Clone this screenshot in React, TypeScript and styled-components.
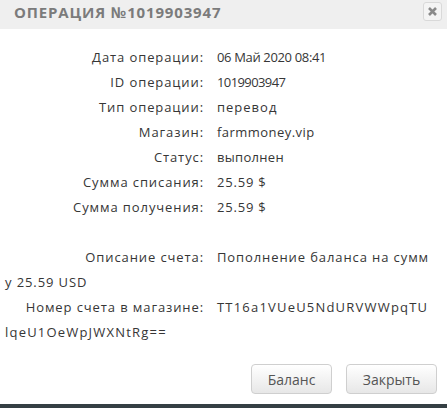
import React from "react";
import styled, { createGlobalStyle } from "styled-components";

const Global = createGlobalStyle`
  html, body { margin: 0; padding: 0; background: #fff; }
  body { width: 447px; height: 408px; overflow: hidden; }
`;

const Dialog = styled.div`
  width: 447px;
  height: 404px;
  display: flex;
  flex-direction: column;
  background: #fff;
  font-family: "Open Sans", "Liberation Sans", sans-serif;
`;

const Header = styled.div`
  height: 29px;
  flex: none;
  background: #efefef;
  display: flex;
  align-items: center;
  justify-content: space-between;
  padding: 0 5px 0 14px;
`;

const Title = styled.div`
  font-family: "Open Sans", "Liberation Sans", sans-serif;
  font-weight: 700;
  font-size: 15px;
  letter-spacing: 0.85px;
  color: #7b7b7b;
  text-transform: uppercase;
  margin-top: -5px;
`;

const CloseButton = styled.button`
  width: 19px;
  height: 19px;
  padding: 0;
  margin-top: -6px;
  border: 1px solid #d9d9d9;
  border-radius: 3px;
  background: #f4f4f4;
  display: flex;
  align-items: center;
  justify-content: center;
`;

const Body = styled.div`
  padding: 16px 15px 0 5px;
  flex: 1;
`;

const Line = styled.div`
  font-size: 13px;
  line-height: 25px;
  color: #363636;
  word-break: break-all;
  min-height: 25px;
`;

const Label = styled.span`
  display: inline-block;
  width: 199px;
  text-align: right;
  margin-right: 13px;
  word-break: normal;
  letter-spacing: 0.9px;
  white-space: nowrap;
`;

const Value = styled.span<{ $ls: number }>`
  letter-spacing: ${(p) => p.$ls}px;
`;

const Footer = styled.div`
  display: flex;
  justify-content: flex-end;
  gap: 14px;
  padding: 0 10px 10px 0;
`;

const Button = styled.button<{ $w: number }>`
  width: ${(p) => p.$w}px;
  height: 30px;
  border: 1px solid #cfcfcf;
  border-radius: 4px;
  background: linear-gradient(#ffffff, #e7e7e7);
  font-family: "Open Sans", "Liberation Sans", sans-serif;
  font-size: 14px;
  color: #555;
  padding: 0;
`;

const BottomBar = styled.div`
  height: 4px;
  background: #353f44;
`;

const rows: [string, string, number][] = [
  ["Дата операции:", "06 Май 2020 08:41", -0.35],
  ["ID операции:", "1019903947", -0.6],
  ["Тип операции:", "перевод", 1.0],
  ["Магазин:", "farmmoney.vip", 0.45],
  ["Статус:", "выполнен", 0.3],
  ["Сумма списания:", "25.59 $", 0.8],
  ["Сумма получения:", "25.59 $", 0.8],
];

export default function App() {
  return (
    <>
      <Global />
      <Dialog>
        <Header>
          <Title>Операция №1019903947</Title>
          <CloseButton aria-label="close">
            <svg width="11" height="11" viewBox="0 0 11 11">
              <path d="M2 2 L9 9 M9 2 L2 9" stroke="#8a8a8a" strokeWidth="2.6" strokeLinecap="butt" />
            </svg>
          </CloseButton>
        </Header>
        <Body>
          {rows.map(([l, v, ls]) => (
            <Line key={l}>
              <Label>{l}</Label>
              <Value $ls={ls}>{v}</Value>
            </Line>
          ))}
          <Line />
          <Line>
            <Label>Описание счета:</Label>
            <Value $ls={0.9}>Пополнение баланса на сумму 25.59 USD</Value>
          </Line>
          <Line>
            <Label>Номер счета в магазине:</Label>
            <Value $ls={1.2}>TT16a1VUeU5NdURVWWpqTUlqeU1OeWpJWXNtRg==</Value>
          </Line>
        </Body>
        <Footer>
          <Button $w={81}>Баланс</Button>
          <Button $w={91}>Закрыть</Button>
        </Footer>
      </Dialog>
      <BottomBar />
    </>
  );
}
